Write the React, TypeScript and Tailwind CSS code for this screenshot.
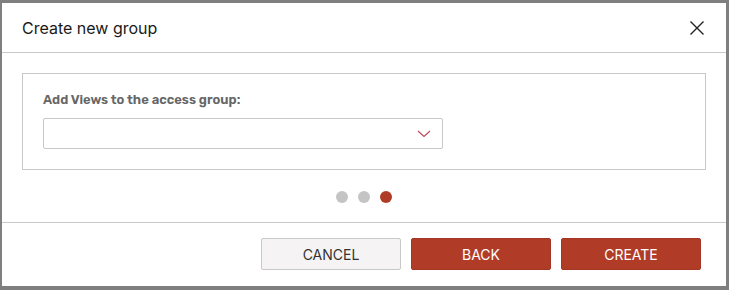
import React from "react";

export default function App() {
  return (
    <div className="w-[729px] h-[290px] bg-[#7f7f7f] pt-[3px] pl-[2px] overflow-hidden" style={{ fontFamily: "Inter, 'Liberation Sans', sans-serif" }}>
      <div className="w-[724px] h-[283px] bg-white flex flex-col">
        <div className="h-[50px] flex items-center justify-between pl-[20px] pr-[20px] border-b border-[#c8c8c8]">
          <span className="text-[16px] text-[#1a1a1a] pt-[1px]">Create new group</span>
          <svg width="16" height="16" viewBox="0 0 16 16" className="mr-[1px]">
            <path d="M1.5 1.5 L14.5 14.5 M14.5 1.5 L1.5 14.5" stroke="#222" strokeWidth="1.4" fill="none" />
          </svg>
        </div>
        <div className="h-[170px] px-[20px] pt-[20px] border-b border-[#c8c8c8] flex flex-col">
          <div className="border border-[#c8c8c8] h-[97px] px-[20px] pt-[18px]">
            <div className="text-[13px] font-semibold text-[#666] leading-[16px] mb-[10px]" style={{ fontFamily: "Rubik, Inter, 'Liberation Sans', sans-serif" }}>
              Add Views to the access group:
            </div>
            <div className="w-[400px] h-[31px] border border-[#c8c8c8] rounded-[2px] flex items-center justify-end pr-[11px]">
              <svg width="14" height="8" viewBox="0 0 14 8">
                <path d="M1 1 L7 6.5 L13 1" stroke="#c0475a" strokeWidth="1.2" fill="none" />
              </svg>
            </div>
          </div>
          <div className="flex justify-center gap-[10px] mt-[21px]">
            <div className="w-[12px] h-[12px] rounded-full bg-[#c4c4c4]" />
            <div className="w-[12px] h-[12px] rounded-full bg-[#c4c4c4]" />
            <div className="w-[12px] h-[12px] rounded-full bg-[#b03c28]" />
          </div>
        </div>
        <div className="flex justify-end gap-[10px] pt-[15px] pr-[25px]">
          <button className="w-[140px] h-[32px] bg-[#f5f3f4] border border-[#c8c8c8] rounded-[2px] text-[14px] text-[#333]">CANCEL</button>
          <button className="w-[140px] h-[32px] bg-[#b03c28] border border-[#a33624] rounded-[2px] text-[14px] text-white">BACK</button>
          <button className="w-[140px] h-[32px] bg-[#b03c28] border border-[#a33624] rounded-[2px] text-[14px] text-white">CREATE</button>
        </div>
      </div>
    </div>
  );
}
